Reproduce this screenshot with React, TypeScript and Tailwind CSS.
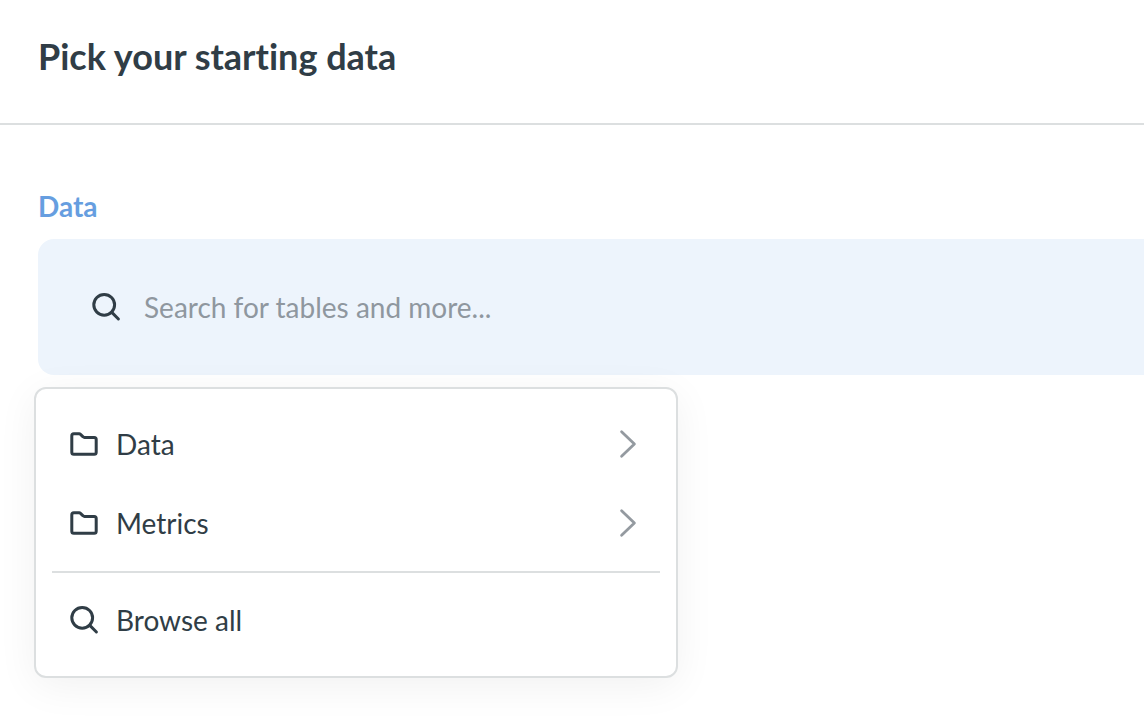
import { useState } from 'react';

interface IconProps {
  className?: string;
}

function SearchIcon({ className }: IconProps) {
  return (
    <svg viewBox="0 0 32 32" fill="none" stroke="currentColor" strokeWidth="3" strokeLinecap="round" aria-hidden="true" className={className}>
      <circle cx="14.2" cy="13.8" r="10.4" />
      <path d="M21.8 21.4L28.4 28" />
    </svg>
  );
}

function FolderIcon({ className }: IconProps) {
  return (
    <svg viewBox="0 0 32 32" fill="none" stroke="currentColor" strokeWidth="3" strokeLinejoin="round" aria-hidden="true" className={className}>
      <path d="M3.8 7.8a2 2 0 0 1 2-2h5.4a2 2 0 0 1 1.3.5l2.6 2.5a2 2 0 0 0 1.4.6h9.7a2 2 0 0 1 2 2v12.8a2 2 0 0 1-2 2H5.8a2 2 0 0 1-2-2z" />
    </svg>
  );
}

function ChevronIcon({ className }: IconProps) {
  return (
    <svg viewBox="0 0 32 32" fill="none" stroke="currentColor" strokeWidth="2.8" strokeLinecap="round" strokeLinejoin="round" aria-hidden="true" className={className}>
      <path d="M9.6 3.8L22.4 16L9.6 28.2" />
    </svg>
  );
}

const sources = ['Data', 'Metrics'];

const rowClass = 'flex w-full items-center gap-4 rounded-lg px-4 py-4 text-left leading-[47px]';
const rowIconClass = 'mb-px size-8 shrink-0';

export default function App() {
  const [query, setQuery] = useState('');

  return (
    <div className="min-h-screen overflow-x-hidden bg-white font-['Lato',sans-serif] text-[28px] text-[#303d46] [font-variant-ligatures:none]">
      <header className="border-b-2 border-[#dcdfe0] pt-8 pb-[42px] pl-[38px]">
        <h1 className="text-[36px] leading-[49px] font-bold">Pick your starting data</h1>
      </header>

      <main className="pt-16 pl-[38px]">
        <label htmlFor="source-search" className="block pb-4 leading-[34px] font-bold text-[#669ee0]">
          Data
        </label>

        {/* Source search */}
        <div className="flex items-center gap-[22px] rounded-l-2xl bg-[#edf4fc] py-[46px] pl-[52px]">
          <SearchIcon className="size-8 shrink-0" />
          <input
            id="source-search"
            type="text"
            value={query}
            onChange={e => setQuery(e.target.value)}
            placeholder="Search for tables and more..."
            className="h-11 min-w-0 flex-1 bg-transparent outline-none placeholder:text-[#8f979f]"
          />
        </div>

        {/* Source menu */}
        <div className="mt-3 -ml-1 w-full max-w-[644px] rounded-xl border-2 border-[#dcdfe0] bg-white p-4 shadow-[0_8px_40px_rgba(0,0,0,0.06)]">
          {sources.map(name => (
            <button key={name} type="button" className={rowClass}>
              <FolderIcon className={rowIconClass} />
              <span className="flex-1">{name}</span>
              <span className="text-[#949aa0]">
                <ChevronIcon className={rowIconClass} />
              </span>
            </button>
          ))}
          <hr className="my-2 border-t-2 border-[#dcdfe0]" />
          <button type="button" className={rowClass}>
            <SearchIcon className={rowIconClass} />
            <span className="flex-1">Browse all</span>
          </button>
        </div>
      </main>
    </div>
  );
}
